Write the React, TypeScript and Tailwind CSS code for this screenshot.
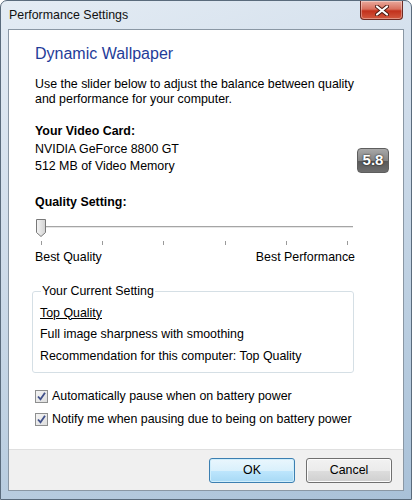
import React from "react"

const font = { fontFamily: '"Liberation Sans", Arial, sans-serif' }

function CloseButton() {
  return (
    <div className="absolute right-[8px] top-0 flex h-[19px] w-[43px] items-center justify-center rounded-b-[4px] border border-t-0 border-[#6d2a22] bg-[linear-gradient(#e9a99c_0%,#d8705e_45%,#c2311c_55%,#d2593f_100%)] shadow-[inset_0_0_0_1px_rgba(255,255,255,0.35)]">
      <svg width="14" height="11" viewBox="0 0 14 11">
        <path d="M2 1.5 L12 9.5 M12 1.5 L2 9.5" stroke="#4a1a12" strokeWidth="4" strokeLinecap="round" />
        <path d="M2 1.5 L12 9.5 M12 1.5 L2 9.5" stroke="#ffffff" strokeWidth="2.2" strokeLinecap="round" />
      </svg>
    </div>
  )
}

function Checkbox({ label }: { label: string }) {
  return (
    <label className="flex items-center gap-[4px]">
      <span className="flex h-[13px] w-[13px] items-center justify-center border border-[#8e8f8f] bg-[linear-gradient(135deg,#f4f4f4,#dedede)]">
        <svg width="11" height="11" viewBox="0 0 11 11">
          <path d="M2 5.5 L4.5 8.3 L9 1.8" stroke="#40508a" strokeWidth="1.8" fill="none" />
        </svg>
      </span>
      <span>{label}</span>
    </label>
  )
}

function Slider() {
  const ticks = [42, 103, 164, 226, 287, 348]
  return (
    <div className="relative mt-[8px] h-[30px] w-[318px]">
      <div className="absolute left-[1px] right-0 top-[7px] h-[2px] border-t border-[#a5a5a5] bg-[#e6e6e6]" />
      {ticks.map((x) => (
        <div key={x} className="absolute top-[22px] h-[4px] w-[1px] bg-[#9a9a9a]" style={{ left: x - 36 }} />
      ))}
      <svg className="absolute left-0 top-[-1px]" width="12" height="20" viewBox="0 0 12 20">
        <defs>
          <linearGradient id="thumb" x1="0" y1="0" x2="1" y2="0">
            <stop offset="0" stopColor="#f5f5f5" />
            <stop offset="1" stopColor="#d2d2d2" />
          </linearGradient>
        </defs>
        <path d="M1.5 1.5 H10.5 V14.5 L6 18.5 L1.5 14.5 Z" fill="url(#thumb)" stroke="#787878" strokeWidth="1" />
      </svg>
    </div>
  )
}

export default function App() {
  return (
    <div
      className="relative flex h-[500px] w-[412px] flex-col overflow-hidden rounded-t-[7px] border border-[#5a6b7c] bg-[linear-gradient(160deg,#e4ecf4_0%,#cfdcea_40%,#bccfe1_70%,#a9c1d8_100%)] text-[12.4px] text-black"
      style={font}
    >
      <div className="flex h-[28px] shrink-0 items-center pl-[8px] text-[12.4px] text-[#111]">
        Performance Settings
      </div>
      <CloseButton />

      <div className="mx-[7px] mb-[8px] flex flex-1 flex-col border border-[#8a97a4] bg-white">
        <div className="flex flex-1 flex-col pl-[26px] pr-[14px]">
          <div className="mt-[14px] text-[16px] leading-[20px] text-[#1f3c99]">Dynamic Wallpaper</div>

          <p className="mt-[13px] leading-[15px]">
            Use the slider below to adjust the balance between quality
            <br />
            and performance for your computer.
          </p>

          <div className="mt-[16px] flex items-end justify-between leading-[17.5px]">
            <div>
              <div className="font-bold">Your Video Card:</div>
              <div>NVIDIA GeForce 8800 GT</div>
              <div>512 MB of Video Memory</div>
            </div>
            <div className="mb-[3px] flex h-[25px] w-[32px] items-center justify-center rounded-[4px] border border-[#5e5e5e] bg-[linear-gradient(#a8a8a8_0%,#858585_50%,#585858_51%,#6e6e6e_100%)] text-[15px] font-bold text-white [text-shadow:0_0_2px_#000]">
              5.8
            </div>
          </div>

          <div className="mt-[18px] font-bold leading-[17px]">Quality Setting:</div>
          <Slider />
          <div className="flex w-[320px] justify-between leading-[17px]">
            <span>Best Quality</span>
            <span>Best Performance</span>
          </div>

          <fieldset className="mt-[18px] ml-[-3px] w-[322px] rounded-[3px] border border-[#d5dfe5] px-[7px] pb-[5px] pt-0">
            <legend className="ml-[1px] px-[1px] leading-[15px]">Your Current Setting</legend>
            <div className="mt-[4px] leading-[21.5px]">
              <div className="underline">Top Quality</div>
              <div>Full image sharpness with smoothing</div>
              <div>Recommendation for this computer: Top Quality</div>
            </div>
          </fieldset>

          <div className="mt-[17px] flex flex-col gap-[10px] leading-[13px]">
            <Checkbox label="Automatically pause when on battery power" />
            <Checkbox label="Notify me when pausing due to being on battery power" />
          </div>
        </div>

        <div className="flex h-[41px] shrink-0 items-center justify-end gap-[11px] border-t border-[#dfdfdf] bg-[#f0f0f0] pr-[11px]">
          <button className="h-[25px] w-[86px] rounded-[3px] border border-[#3c7fb1] bg-[linear-gradient(#eaf6fd_0%,#d9f0fc_50%,#bee6fd_51%,#a7d9f5_100%)] shadow-[inset_0_0_0_1px_#cfeefc]">
            OK
          </button>
          <button className="h-[25px] w-[86px] rounded-[3px] border border-[#707070] bg-[linear-gradient(#f2f2f2_0%,#ebebeb_50%,#dddddd_51%,#cfcfcf_100%)] shadow-[inset_0_0_0_1px_#fcfcfc]">
            Cancel
          </button>
        </div>
      </div>
    </div>
  )
}
